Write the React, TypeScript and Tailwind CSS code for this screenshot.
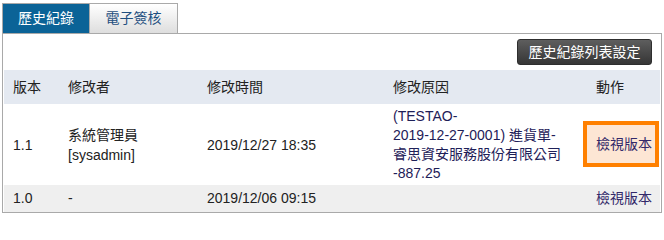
import React from "react";

const font = { fontFamily: '"Liberation Sans", Arial, "Noto Sans CJK TC", sans-serif' };

export default function App() {
  return (
    <div className="w-[664px] h-[216px] bg-white pt-[3px] pl-[2px] text-[14px] text-[#222]" style={font}>
      <div className="flex h-[30px]">
        <div className="w-[88px] h-[30px] border border-[#a9a9a9] border-b-0 bg-[#0b6397] text-white flex items-center justify-center">
          歷史紀錄
        </div>
        <div className="w-[88px] h-[30px] border border-l-0 border-[#a9a9a9] border-b-0 bg-gradient-to-b from-white to-[#dedede] text-[#1f4f80] flex items-center justify-center">
          電子簽核
        </div>
      </div>
      <div className="w-[660px] h-[180px] border border-[#a9a9a9] px-[1px]">
        <div className="flex justify-end pt-[5px] pr-[8px]">
          <div className="h-[26px] w-[135px] rounded-[3px] border border-[#2e2e2e] bg-gradient-to-b from-[#5e5e5e] to-[#363636] text-white flex items-center justify-center">
            歷史紀錄列表設定
          </div>
        </div>
        <div className="mt-[5px]">
          <div className="grid grid-cols-[55px_139px_186px_203px_73px] h-[34px] bg-[#e4e9f1] items-center">
            <div className="pl-[9px]">版本</div>
            <div className="pl-[9px]">修改者</div>
            <div className="pl-[9px]">修改時間</div>
            <div className="pl-[9px]">修改原因</div>
            <div className="pl-[9px]">動作</div>
          </div>
          <div className="grid grid-cols-[55px_139px_186px_203px_73px] h-[81px] bg-white items-center leading-[18px]">
            <div className="pl-[9px]">1.1</div>
            <div className="pl-[9px] leading-[20px]">
              <div>系統管理員</div>
              <div>[sysadmin]</div>
            </div>
            <div className="pl-[9px]">2019/12/27 18:35</div>
            <div className="pl-[9px] text-[#1e2058] leading-[19px]">
              <div>(TESTAO-</div>
              <div>2019-12-27-0001) 進貨單-</div>
              <div>睿思資安服務股份有限公司</div>
              <div>-887.25</div>
            </div>
            <div className="relative h-full">
              <div className="absolute left-[-4px] top-[17px] w-[76px] h-[46px] border-[4px] border-[#ff8000] bg-[#fde6d4] flex items-center pl-[9px] text-[#33296a]">
                檢視版本
              </div>
            </div>
          </div>
          <div className="grid grid-cols-[55px_139px_186px_203px_73px] h-[27px] bg-[#efefef] items-center">
            <div className="pl-[9px]">1.0</div>
            <div className="pl-[9px]">-</div>
            <div className="pl-[9px]">2019/12/06 09:15</div>
            <div className="pl-[9px]"></div>
            <div className="pl-[9px] text-[#33296a]">檢視版本</div>
          </div>
        </div>
      </div>
    </div>
  );
}
